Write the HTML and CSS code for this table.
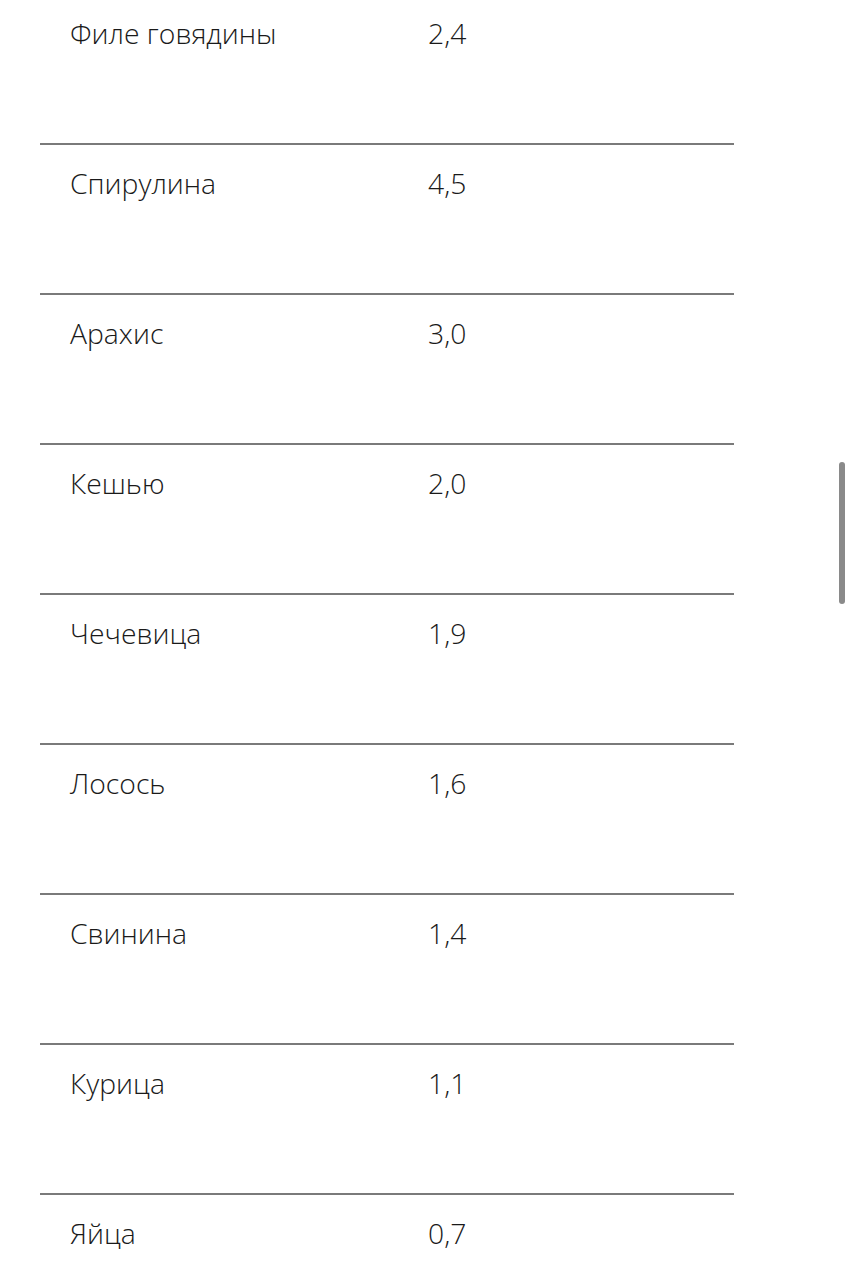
FILE: index.html
```html
<!DOCTYPE html>
<html lang="ru">
<head>
<meta charset="utf-8">
<title>Таблица</title>
<link rel="stylesheet" href="styles.css">
</head>
<body>
<div class="table">
  <div class="row"><div class="name">Филе говядины</div><div class="value">2,4</div></div>
  <div class="row"><div class="name">Спирулина</div><div class="value">4,5</div></div>
  <div class="row"><div class="name">Арахис</div><div class="value">3,0</div></div>
  <div class="row"><div class="name">Кешью</div><div class="value">2,0</div></div>
  <div class="row"><div class="name">Чечевица</div><div class="value">1,9</div></div>
  <div class="row"><div class="name">Лосось</div><div class="value">1,6</div></div>
  <div class="row"><div class="name">Свинина</div><div class="value">1,4</div></div>
  <div class="row"><div class="name">Курица</div><div class="value">1,1</div></div>
  <div class="row"><div class="name">Яйца</div><div class="value">0,7</div></div>
</div>
<div class="scrollbar"></div>
</body>
</html>
```
FILE: styles.css
```css
html, body {
  margin: 0;
  padding: 0;
  background: #ffffff;
  overflow: hidden;
}
body {
  font-family: "Open Sans", "Noto Sans", sans-serif;
  color: #1a1a1a;
  height: 1280px;
}
.table {
  margin: -7px 0 0 40px;
  width: 694px;
}
.row {
  display: grid;
  grid-template-columns: 358px 1fr;
  height: 129px;
  padding: 19px 0 0 30px;
  border-top: 2px solid #7a7a7a;
  font-size: 28.3px;
  line-height: 38px;
  font-weight: 350;
}
.row:first-child {
  border-top-color: transparent;
}
.scrollbar {
  position: fixed;
  left: 839px;
  top: 462px;
  width: 6px;
  height: 142px;
  border-radius: 3px;
  background: #8a8a8a;
}
```
